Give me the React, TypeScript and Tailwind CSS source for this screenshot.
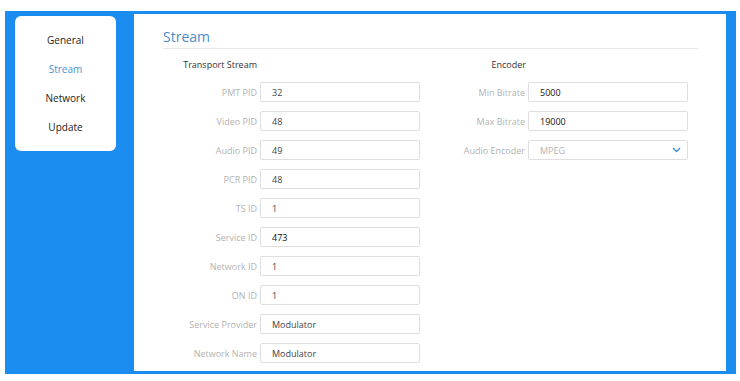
import React from "react";

const leftRows: [string, string, string?][] = [
  ["PMT PID", "32"],
  ["Video PID", "48"],
  ["Audio PID", "49"],
  ["PCR PID", "48"],
  ["TS ID", "1"],
  ["Service ID", "473", "dark"],
  ["Network ID", "1"],
  ["ON ID", "1"],
  ["Service Provider", "Modulator"],
  ["Network Name", "Modulator"],
];

function Row({ label, value, labelW, dark, select }: { label: string; value: string; labelW: string; dark?: boolean; select?: boolean }) {
  return (
    <div className="flex items-center h-[20px]">
      <div className={`${labelW} text-right pr-[3px] text-[9px] text-[#b3b3b3] leading-none whitespace-nowrap`}>{label}</div>
      <div className="w-[160px] h-[20px] border border-[#dedede] rounded-[2px] bg-white flex items-center pl-[11px] pr-[6px] justify-between">
        <span className={`text-[9px] leading-none ${select ? "text-[#b3b3b3]" : dark ? "text-[#111]" : "text-[#444]"}`}>{value}</span>
        {select && (
          <svg width="9" height="6" viewBox="0 0 9 6" fill="none">
            <path d="M1 1l3.5 3.5L8 1" stroke="#3b8fd9" strokeWidth="1.4" />
          </svg>
        )}
      </div>
    </div>
  );
}

export default function App() {
  return (
    <div className="w-[740px] h-[381px] bg-white pt-[11px] pl-[5px]" style={{ fontFamily: '"Open Sans", "Noto Sans", sans-serif' }}>
      <div className="w-[731px] h-[363px] bg-[#1b8df0] flex pl-[10px] pr-[10px] pt-[3px] pb-[3px] gap-[18px]">
        <div className="mt-[2px] w-[101px] h-[135px] bg-white rounded-[6px] flex flex-col pt-[10px]">
          {["General", "Stream", "Network", "Update"].map((t) => (
            <div key={t} className={`h-[29px] flex items-center justify-center text-[10px] ${t === "Stream" ? "text-[#4a8fd2]" : "text-[#222]"}`}>
              {t}
            </div>
          ))}
        </div>
        <div className="flex-1 bg-white pl-[29px] pr-[28px] pt-[13px]">
          <div className="h-[20px] flex items-center text-[14px] text-[#4a8cc9] leading-none">Stream</div>
          <div className="mt-[1px] border-b border-[#e6e6e6]" />
          <div className="flex gap-[10px] mt-[10px]">
            <div className="flex flex-col">
              <div className="w-[97px] pr-[3px] text-right text-[9px] font-medium text-[#333] leading-[12px] whitespace-nowrap">Transport Stream</div>
              <div className="flex flex-col gap-[9px] mt-[11px]">
                {leftRows.map(([l, v, d]) => (
                  <Row key={l} label={l} value={v} labelW="w-[97px]" dark={d === "dark"} />
                ))}
              </div>
            </div>
            <div className="flex flex-col">
              <div className="w-[98px] pr-[2px] text-right text-[9px] font-medium text-[#333] leading-[12px] whitespace-nowrap">Encoder</div>
              <div className="flex flex-col gap-[9px] mt-[11px]">
                <Row label="Min Bitrate" value="5000" labelW="w-[98px]" dark />
                <Row label="Max Bitrate" value="19000" labelW="w-[98px]" dark />
                <Row label="Audio Encoder" value="MPEG" labelW="w-[98px]" select />
              </div>
            </div>
          </div>
        </div>
      </div>
    </div>
  );
}
